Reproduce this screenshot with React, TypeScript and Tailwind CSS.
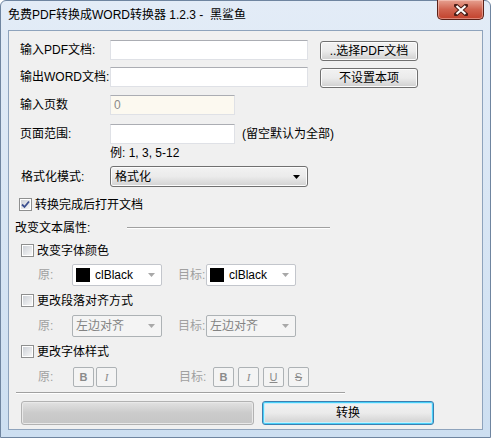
import React from "react";

const font = "font-['Liberation_Sans','Noto_Sans_CJK_SC',sans-serif]";

function Checkbox({ checked = false, label }: { checked?: boolean; label: string }) {
  return (
    <label className="flex items-center h-[13px] gap-[3px]">
      <span className="w-[13px] h-[13px] border border-[#8e8f8f] bg-white p-[1px] flex">
        <span className="flex-1 bg-gradient-to-br from-[#cdd1d7] to-[#f7f7f7] flex items-center justify-center">
          {checked && (
            <svg width="9" height="9" viewBox="0 0 9 9">
              <path d="M1 4.5 L3.5 7 L8 1.5" stroke="#3b4f8f" strokeWidth="1.8" fill="none" />
            </svg>
          )}
        </span>
      </span>
      <span className="text-[12px] leading-[14px] text-black">{label}</span>
    </label>
  );
}

function TextBox({ w, value, cream = false }: { w: string; value?: string; cream?: boolean }) {
  return (
    <div
      className={`${w} h-[20px] border border-[#dfe1e6] border-t-[#abadb3] flex items-center px-[3px] text-[12px] text-[#8a8a8a] ${
        cream ? "bg-[#fcf9f0] border-[#c9c9c4] border-t-[#a9a9a4]" : "bg-white"
      }`}
    >
      {value}
    </div>
  );
}

function WinButton({ label, w, h = "h-[20px]", focused = false }: { label: string; w: string; h?: string; focused?: boolean }) {
  return (
    <button
      className={`${w} ${h} rounded-[3px] border ${
        focused ? "border-[#3c7fb1] shadow-[inset_0_0_0_1px_#48d0f8,inset_0_0_0_2px_#c8eefc]" : "border-[#707070] shadow-[inset_0_0_0_1px_#fcfcfc]"
      } bg-gradient-to-b from-[#f2f2f2] via-[#ebebeb] via-50% to-[#cfcfcf] flex items-center justify-center text-[12px] leading-[14px] text-black`}
    >
      {label}
    </button>
  );
}

function Arrow({ color = "#000" }: { color?: string }) {
  return (
    <svg width="7" height="4" viewBox="0 0 7 4">
      <path d="M0 0 H7 L3.5 4 Z" fill={color} />
    </svg>
  );
}

function ColorCombo() {
  return (
    <div className="w-[90px] h-[22px] bg-white border border-[#c3c6cc] rounded-[2px] flex items-center pl-[3px] pr-[6px]">
      <span className="w-[14px] h-[14px] bg-black" />
      <span className="ml-[5px] flex-1 text-[12px] leading-[14px] text-black">clBlack</span>
      <Arrow color="#a8a8a8" />
    </div>
  );
}

function DisabledCombo() {
  return (
    <div className="w-[90px] h-[22px] bg-[#f4f4f4] border border-[#adb2b5] rounded-[2px] flex items-center pl-[3px] pr-[6px]">
      <span className="flex-1 text-[12px] leading-[14px] text-[#838383]">左边对齐</span>
      <Arrow color="#a8a8a8" />
    </div>
  );
}

function StyleButton({ children, cls = "" }: { children: React.ReactNode; cls?: string }) {
  return (
    <span
      className={`w-[21px] h-[20px] border border-[#adb2b5] rounded-[2px] bg-[#f4f4f4] flex items-center justify-center text-[11px] leading-[12px] text-[#8a8a8a] ${cls}`}
    >
      {children}
    </span>
  );
}

export default function App() {
  return (
    <div
      className={`${font} w-[491px] h-[438px] bg-gradient-to-b from-[#e3ecf7] to-[#cddff1] border border-[#6f85a0] rounded-t-[6px] flex flex-col px-[7px] pb-[7px]`}
    >
      {/* title bar */}
      <div className="h-[29px] flex items-start justify-between">
        <span className="mt-[6px] text-[12px] leading-[16px] text-black">免费PDF转换成WORD转换器 1.2.3 -&nbsp; 黑鲨鱼</span>
        <div className="-mt-[1px] mr-[-1px] w-[47px] h-[20px] rounded-b-[5px] border border-[#5b2118] border-t-0 bg-gradient-to-b from-[#e6a191] via-[#d0634f] via-50% to-[#c2412c] shadow-[inset_0_0_0_1px_rgba(255,220,210,0.45)] flex items-center justify-center">
          <svg width="14" height="12" viewBox="0 0 14 12">
            <path d="M2 1.5 L12 10.5 M12 1.5 L2 10.5" stroke="#4a1d16" strokeWidth="4" strokeLinecap="square" />
            <path d="M2.5 2 L11.5 10 M11.5 2 L2.5 10" stroke="#ffffff" strokeWidth="2.2" />
          </svg>
        </div>
      </div>

      {/* client area */}
      <div className="flex-1 bg-[#f0f0f0] border border-[#8ea3bc] flex flex-col text-[12px] leading-[14px] text-black">
        <div className="flex items-center h-[20px] mt-[9px] pl-[11px]">
          <span className="w-[90px]">输入PDF文档:</span>
          <TextBox w="w-[198px]" />
          <div className="ml-[12px] mt-[2px]">
            <WinButton label="..选择PDF文档" w="w-[98px]" />
          </div>
        </div>
        <div className="flex items-center h-[20px] mt-[7px] pl-[11px]">
          <span className="w-[90px]">输出WORD文档:</span>
          <TextBox w="w-[198px]" />
          <div className="ml-[12px] mt-[1px]">
            <WinButton label="不设置本项" w="w-[98px]" />
          </div>
        </div>
        <div className="flex items-center h-[20px] mt-[8px] pl-[11px]">
          <span className="w-[90px]">输入页数</span>
          <TextBox w="w-[125px]" value="0" cream />
        </div>
        <div className="flex items-center h-[20px] mt-[9px] pl-[11px]">
          <span className="w-[90px]">页面范围:</span>
          <TextBox w="w-[125px]" />
          <span className="ml-[7px]">(留空默认为全部)</span>
        </div>
        <div className="h-[14px] mt-[2px] pl-[101px]">例: 1, 3, 5-12</div>
        <div className="flex items-center h-[21px] mt-[6px] pl-[12px]">
          <span className="w-[89px]">格式化模式:</span>
          <div className="w-[198px] h-[21px] rounded-[3px] border border-[#707070] shadow-[inset_0_0_0_1px_#fcfcfc] bg-gradient-to-b from-[#f2f2f2] via-[#ebebeb] via-50% to-[#d2d2d2] flex items-center pl-[4px] pr-[7px]">
            <span className="flex-1">格式化</span>
            <Arrow />
          </div>
        </div>
        <div className="mt-[11px] pl-[10px]">
          <Checkbox checked label="转换完成后打开文档" />
        </div>
        <div className="flex items-center h-[14px] mt-[10px] pl-[6px]">
          <span className="w-[112px]">改变文本属性:</span>
          <div className="w-[203px] h-[2px] border-t border-[#a0a0a0] border-b border-b-white" />
        </div>
        <div className="mt-[9px] pl-[12px]">
          <Checkbox label="改变字体颜色" />
        </div>
        <div className="flex items-center h-[22px] mt-[7px] pl-[29px]">
          <span className="w-[34px] text-[#a0a0a0]">原:</span>
          <ColorCombo />
          <span className="ml-[16px] w-[28px] text-[#a0a0a0]">目标:</span>
          <ColorCombo />
        </div>
        <div className="mt-[8px] pl-[12px]">
          <Checkbox label="更改段落对齐方式" />
        </div>
        <div className="flex items-center h-[22px] mt-[8px] pl-[29px]">
          <span className="w-[34px] text-[#a0a0a0]">原:</span>
          <DisabledCombo />
          <span className="ml-[16px] w-[28px] text-[#a0a0a0]">目标:</span>
          <DisabledCombo />
        </div>
        <div className="mt-[8px] pl-[12px]">
          <Checkbox label="更改字体样式" />
        </div>
        <div className="flex items-center h-[20px] mt-[9px] pl-[29px]">
          <span className="w-[35px] text-[#a0a0a0]">原:</span>
          <div className="flex gap-[2px]">
            <StyleButton cls="font-bold">B</StyleButton>
            <StyleButton cls="italic font-['Liberation_Serif',serif]">I</StyleButton>
          </div>
          <span className="ml-[62px] w-[34px] text-[#a0a0a0]">目标:</span>
          <div className="flex gap-[4px]">
            <StyleButton cls="font-bold">B</StyleButton>
            <StyleButton cls="italic font-['Liberation_Serif',serif]">I</StyleButton>
            <StyleButton cls="underline">U</StyleButton>
            <StyleButton cls="line-through">S</StyleButton>
          </div>
        </div>
        <div className="ml-[7px] mt-[5px] w-[329px] h-[2px] border-t border-[#a0a0a0] border-b border-b-white" />
        <div className="flex items-center mt-[7px] pl-[12px] gap-[8px]">
          <div className="w-[233px] h-[24px] rounded-[3px] border border-[#b2b2b2] bg-gradient-to-b from-[#e2e2e2] via-[#cbcbcb] to-[#c6c6c6] shadow-[inset_0_0_0_1px_#e9e9e9]" />
          <WinButton label="转换" w="w-[172px]" h="h-[24px]" focused />
        </div>
      </div>
    </div>
  );
}
